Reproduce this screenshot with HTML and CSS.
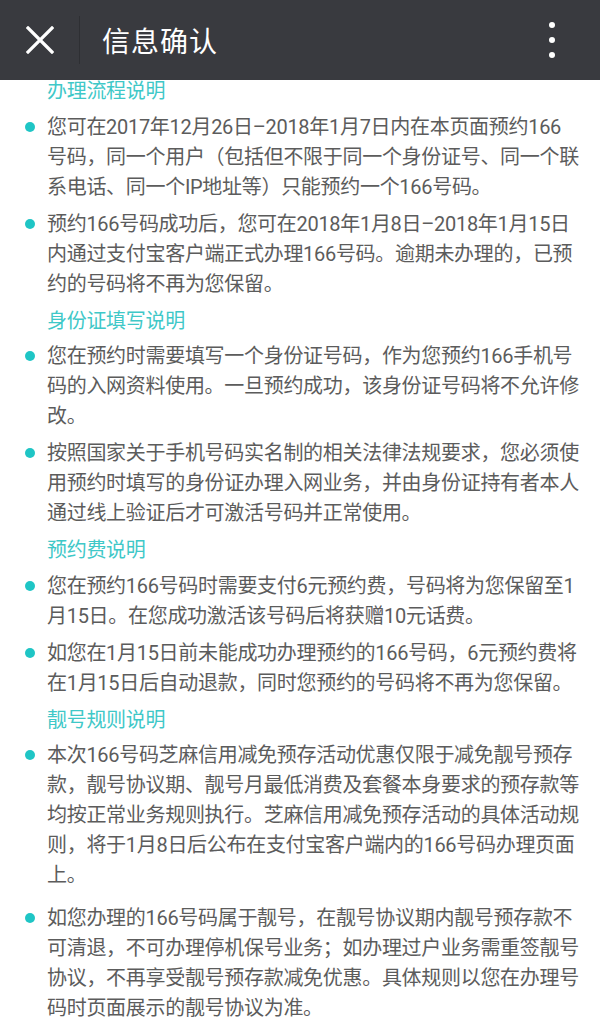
FILE: index.html
```html
<!DOCTYPE html>
<html lang="zh-CN">
<head>
    <meta charset="UTF-8">
    <meta name="viewport" content="width=device-width, initial-scale=1.0">
    <title>信息确认</title>
    <link rel="stylesheet" href="styles.css">
</head>
<body>

    <div class="topbar">
        <div class="close">
            <svg width="28" height="28" viewBox="0 0 28 28">
                <path d="M2 2 L26 26 M26 2 L2 26" stroke="#fff" stroke-width="3.2" stroke-linecap="square" fill="none"/>
            </svg>
        </div>
        <div class="title">信息确认</div>
        <div class="more">
            <span></span><span></span><span></span>
        </div>
    </div>

    <div class="content">

        <h2>办理流程说明</h2>
        <ul>
            <li>您可在2017年12月26日–2018年1月7日内在本页面预约166<br>号码，同一个用户（包括但不限于同一个身份证号、同一个联<br>系电话、同一个IP地址等）只能预约一个166号码。</li>
            <li>预约166号码成功后，您可在2018年1月8日–2018年1月15日<br>内通过支付宝客户端正式办理166号码。逾期未办理的，已预<br>约的号码将不再为您保留。</li>
        </ul>

        <h2>身份证填写说明</h2>
        <ul>
            <li>您在预约时需要填写一个身份证号码，作为您预约166手机号<br>码的入网资料使用。一旦预约成功，该身份证号码将不允许修<br>改。</li>
            <li>按照国家关于手机号码实名制的相关法律法规要求，您必须使<br>用预约时填写的身份证办理入网业务，并由身份证持有者本人<br>通过线上验证后才可激活号码并正常使用。</li>
        </ul>

        <h2>预约费说明</h2>
        <ul>
            <li>您在预约166号码时需要支付6元预约费，号码将为您保留至1<br>月15日。在您成功激活该号码后将获赠10元话费。</li>
            <li>如您在1月15日前未能成功办理预约的166号码，6元预约费将<br>在1月15日后自动退款，同时您预约的号码将不再为您保留。</li>
        </ul>

        <h2>靓号规则说明</h2>
        <ul class="rules">
            <li>本次166号码芝麻信用减免预存活动优惠仅限于减免靓号预存<br>款，靓号协议期、靓号月最低消费及套餐本身要求的预存款等<br>均按正常业务规则执行。芝麻信用减免预存活动的具体活动规<br>则，将于1月8日后公布在支付宝客户端内的166号码办理页面<br>上。</li>
            <li>如您办理的166号码属于靓号，在靓号协议期内靓号预存款不<br>可清退，不可办理停机保号业务；如办理过户业务需重签靓号<br>协议，不再享受靓号预存款减免优惠。具体规则以您在办理号<br>码时页面展示的靓号协议为准。</li>
        </ul>

    </div>

</body>
</html>
```

FILE: styles.css
```css
body {
    margin: 0;
    background-color: #fff;
    font-family: Roboto, "Liberation Sans", "Noto Sans CJK SC", sans-serif;
}

.topbar {
    position: relative;
    z-index: 1;
    display: flex;
    align-items: center;
    height: 80px;
    background-color: #393a3f;
    color: #fff;
}

.close {
    display: flex;
    align-items: center;
    justify-content: center;
    width: 80px;
    height: 48px;
    border-right: 1px solid #2e2f33;
    box-sizing: border-box;
}

.title {
    flex: 1;
    padding-left: 22px;
    font-size: 28px;
    letter-spacing: 1px;
}

.more {
    display: flex;
    flex-direction: column;
    align-items: center;
    gap: 9px;
    width: 44px;
    margin-right: 26px;
}

    .more span {
        width: 6px;
        height: 6px;
        border-radius: 50%;
        background-color: #fff;
    }

/* page is scrolled a little: first heading sits under the bar */
.content {
    margin-top: -4px;
    padding-right: 8px;
}

h2 {
    margin: 0 0 5.5px 0;
    padding-left: 47px;
    font-size: 20px;
    font-weight: normal;
    line-height: 30px;
    letter-spacing: -0.3px;
    color: #3fc8c8;
}

ul {
    list-style: none;
    margin: 0 0 4px 0;
    padding: 0;
}

li {
    display: flex;
    margin-bottom: 7px;
    font-size: 20px;
    line-height: 30px;
    letter-spacing: -0.3px;
    color: #5c5c5c;
}

    li::before {
        content: "";
        flex: none;
        width: 10px;
        height: 10px;
        margin: 10px 12px 0 25px;
        border-radius: 50%;
        background-color: #1fc5c5;
    }

.rules li {
    margin-bottom: 12.5px;
}
```
